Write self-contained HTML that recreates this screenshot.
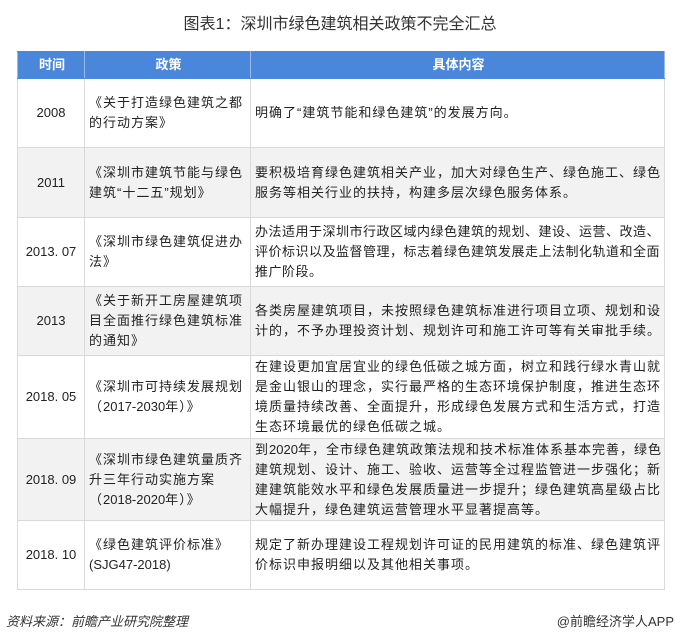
<!DOCTYPE html>
<html><head><meta charset="utf-8"><style>
body{margin:0;width:680px;height:637px;background:#fff;font-family:"Liberation Sans","Noto Sans CJK SC",sans-serif;color:#222;position:relative;overflow:hidden}
.title{position:absolute;top:10px;left:0;width:680px;text-align:center;font-size:16px;color:#333}
table{position:absolute;left:17px;top:51px;width:648px;border-collapse:collapse;font-size:13px;line-height:20px;letter-spacing:1px;table-layout:fixed}
td,th{border:1px solid #d9d9d9;padding:0 2px 0 4px;vertical-align:middle;overflow:hidden}
th{background:#4a86d9;color:#fff;height:26px;font-weight:bold;border-color:#4a86d9 #9bb8e6;letter-spacing:0}
td.c{text-align:center;padding:0;letter-spacing:0}
tr.g td{background:#f2f2f2}
.l{letter-spacing:0}
.src{position:absolute;top:611px;left:6px;font-size:13px;font-style:italic;color:#333}
.app{position:absolute;top:611px;right:6px;font-size:13px;color:#333}
</style></head><body>
<div class="title">图表1：深圳市绿色建筑相关政策不完全汇总</div>
<table>
<colgroup><col style="width:67px"><col style="width:166px"><col></colgroup>
<tr><th>时间</th><th>政策</th><th>具体内容</th></tr>
<tr style="height:69px"><td class="c">2008</td><td>《关于打造绿色建筑之都的行动方案》</td><td>明确了“建筑节能和绿色建筑”的发展方向。</td></tr>
<tr class="g" style="height:70px"><td class="c">2011</td><td>《深圳市建筑节能与绿色建筑“十二五”规划》</td><td>要积极培育绿色建筑相关产业，加大对绿色生产、绿色施工、绿色服务等相关行业的扶持，构建多层次绿色服务体系。</td></tr>
<tr style="height:69px"><td class="c">2013. 07</td><td>《深圳市绿色建筑促进办法》</td><td style="letter-spacing:0.5px">办法适用于深圳市行政区域内绿色建筑的规划、建设、运营、改造、评价标识以及监督管理，标志着绿色建筑发展走上法制化轨道和全面推广阶段。</td></tr>
<tr class="g" style="height:69px"><td class="c">2013</td><td>《关于新开工房屋建筑项目全面推行绿色建筑标准的通知》</td><td>各类房屋建筑项目，未按照绿色建筑标准进行项目立项、规划和设计的，不予办理投资计划、规划许可和施工许可等有关审批手续。</td></tr>
<tr style="height:83px"><td class="c">2018. 05</td><td>《深圳市可持续发展规划（<span class="l">2017-2030</span>年）》</td><td>在建设更加宜居宜业的绿色低碳之城方面，树立和践行绿水青山就是金山银山的理念，实行最严格的生态环境保护制度，推进生态环境质量持续改善、全面提升，形成绿色发展方式和生活方式，打造生态环境最优的绿色低碳之城。</td></tr>
<tr class="g" style="height:82px"><td class="c">2018. 09</td><td>《深圳市绿色建筑量质齐升三年行动实施方案（<span class="l">2018-2020</span>年）》</td><td>到<span class="l">2020</span>年，全市绿色建筑政策法规和技术标准体系基本完善，绿色建筑规划、设计、施工、验收、运营等全过程监管进一步强化；新建建筑能效水平和绿色发展质量进一步提升；绿色建筑高星级占比大幅提升，绿色建筑运营管理水平显著提高等。</td></tr>
<tr style="height:69px"><td class="c">2018. 10</td><td>《绿色建筑评价标准》<br><span class="l">(SJG47-2018)</span></td><td>规定了新办理建设工程规划许可证的民用建筑的标准、绿色建筑评价标识申报明细以及其他相关事项。</td></tr>
</table>
<div class="src">资料来源：前瞻产业研究院整理</div>
<div class="app">@前瞻经济学人APP</div>
</body></html>
